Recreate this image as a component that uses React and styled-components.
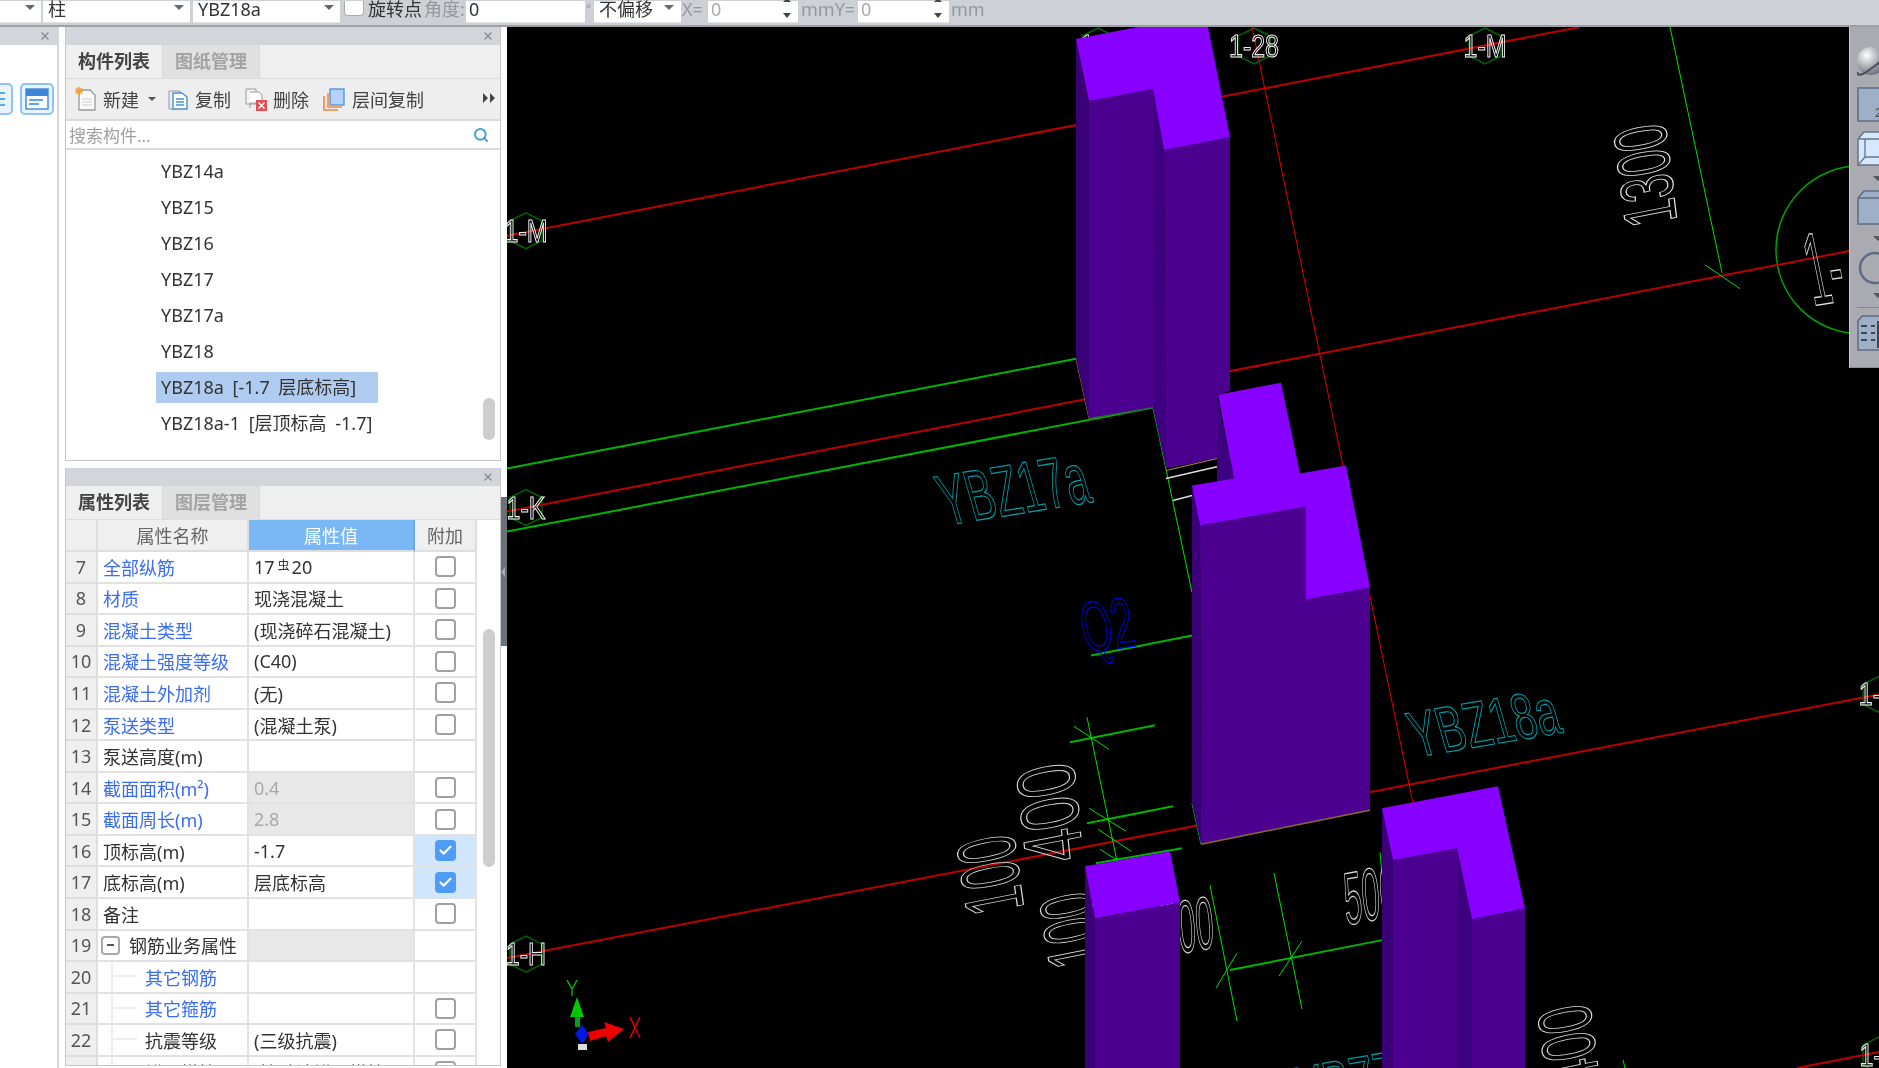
import React from 'react';
import styled, { createGlobalStyle } from 'styled-components';
import { Search, Check, X as XIcon } from 'lucide-react';

const Global = createGlobalStyle`
  html, body { margin: 0; padding: 0; background: #fff; overflow: hidden; }
  body { font-family: "Noto Sans", "Noto Sans CJK SC", sans-serif; font-size: 18px; color: #333; }
  #root { width: 1879px; height: 1068px; }
`;

const Page = styled.div`
  width: 1879px; height: 1068px; display: flex; flex-direction: column; overflow: hidden; filter: blur(0.35px);
`;

/* ---------- top toolbar ---------- */
const TopBar = styled.div`
  height: 27px; flex: none; box-sizing: border-box; display: flex; align-items: flex-start;
  background: #cdd0d4; border-bottom: 2px solid #9da0a5; line-height: 16px; padding-top: 1px;
`;
const Field = styled.div`
  width: ${p => p.$w}px; margin-left: ${p => p.$ml || 0}px; height: 22px; flex: none; box-sizing: border-box;
  padding-left: ${p => p.$pl ?? 5}px; background: #fff; position: relative; color: ${p => p.$muted ? '#aaa' : '#333'};
  border-bottom: 1px solid #e4e4e4; white-space: nowrap;
`;
const Caret = styled.i`
  position: absolute; right: ${p => p.$r}px; top: 4px; width: 0; height: 0;
  border-left: 5px solid transparent; border-right: 5px solid transparent; border-top: 5px solid #666;
`;
const SpinBox = styled.div`
  position: absolute; right: 6px; top: -3px; height: 20px; width: 10px;
  display: flex; flex-direction: column; justify-content: space-between; align-items: center;
`;
const SpinUp = styled.i`
  width: 0; height: 0; border-left: 4px solid transparent; border-right: 4px solid transparent; border-bottom: 4px solid #444;
`;
const SpinDown = styled.i`
  width: 0; height: 0; border-left: 4px solid transparent; border-right: 4px solid transparent; border-top: 5px solid #444;
`;
const TopCheck = styled.div`
  width: 20px; height: 15px; margin-left: 4px; flex: none; background: #fff; border: 1px solid #aaa;
  border-top: none; border-radius: 0 0 4px 4px; box-sizing: border-box;
`;
const TopText = styled.span`
  flex: none; white-space: nowrap; font-size: ${p => p.$fs || 18}px; width: ${p => p.$w}px; margin-left: ${p => p.$ml || 0}px;
  color: ${p => p.$muted ? '#95989c' : '#333'};
`;

/* ---------- main ---------- */
const Main = styled.div`flex: 1; display: flex; min-height: 0; background: #fff;`;
const LeftDock = styled.div`
  width: 59px; flex: none; box-sizing: border-box; border-right: 2px solid #d4d6da; display: flex; flex-direction: column;
`;
const DockHead = styled.div`
  height: 18px; flex: none; background: #d3d5da; display: flex; align-items: center; justify-content: flex-end; padding-right: ${p => p.$pr}px; color: #8a8d92;
`;
const DockButtons = styled.div`
  display: flex; gap: 7px; margin: 38px 0 0 -21px;
`;
const ViewButton = styled.div`
  width: 34px; height: 32px; box-sizing: border-box; border: 2px solid #8cc2f8; border-radius: 5px; background: #eaf4fe;
  display: flex; align-items: center; justify-content: center; flex: none;
`;
const SideColumn = styled.div`
  width: 436px; margin-left: 6px; flex: none; display: flex; flex-direction: column; gap: 7px;
`;
const Panel = styled.section`
  box-sizing: border-box; height: ${p => p.$h}px; flex: none; border: 1px solid #c4c6c9; border-top: none;
  display: flex; flex-direction: column; overflow: hidden; position: relative; background: #fff;
`;
const TabRow = styled.div`
  height: 34px; flex: none; box-sizing: border-box; background: #efefef; border-bottom: 1px solid #dcdcdc; display: flex;
`;
const Tab = styled.div`
  width: 97px; box-sizing: border-box; text-align: center; line-height: 33px; font-size: 18px; flex: none;
  font-weight: 700; color: ${p => p.$active ? '#444' : '#a3a3a3'};
  background: ${p => p.$active ? '#efefef' : '#e0e0e0'}; border-right: 1px solid #d8d8d8;
`;
const ActionRow = styled.div`
  height: 42px; flex: none; box-sizing: border-box; background: #eeeeee; border-bottom: 2px solid #dadada; display: flex; align-items: center;
  padding-left: 9px; position: relative; color: #444;
`;
const ActionGlyph = styled.svg`flex: none; margin-right: ${p => p.$mr}px; margin-left: ${p => p.$ml || 0}px;`;
const ActionLabel = styled.span`flex: none; white-space: nowrap;`;
const ActionCaret = styled.i`
  margin: 0 12px 0 9px; flex: none; width: 0; height: 0; border-left: 4px solid transparent; border-right: 4px solid transparent; border-top: 4px solid #555;
`;
const MoreMark = styled.svg`position: absolute; right: 5px; top: 14px;`;
const SearchRow = styled.div`
  height: 29px; flex: none; box-sizing: border-box; border-bottom: 2px solid #dadada; display: flex; align-items: center; justify-content: space-between;
  padding: 0 11px 0 3px; color: #a0a0a0; font-size: 17px;
`;
const List = styled.div`flex: 1; padding: 3px 0 0 90px; min-height: 0;`;
const ListRow = styled.div`height: 36px; display: flex; align-items: center; white-space: nowrap;`;
const ListText = styled.span`
  width: 222px; height: 31px; line-height: 30px; box-sizing: border-box; padding-left: 5px; flex: none; word-spacing: 4px;
  background: ${p => p.$selected ? '#afcbef' : 'transparent'};
`;
const Thumb = styled.div`
  position: absolute; left: 417px; top: ${p => p.$top}px; width: 12px; height: ${p => p.$h}px; border-radius: 6px; background: #cdcdcd;
`;
const Table = styled.div`
  display: grid; grid-template-columns: 32px 151px 166px 62px; grid-template-rows: 32px; grid-auto-rows: 31.56px; width: 411px;
`;
const HeadCell = styled.div`
  background: ${p => p.$active ? '#7ab7f5' : '#efefef'}; color: ${p => p.$active ? '#fff' : '#666'};
  box-sizing: border-box; border-right: 2px solid ${p => p.$active ? '#6aa9ea' : '#dedede'}; border-bottom: 2px solid #dedede;
  display: flex; align-items: center; justify-content: center; white-space: nowrap;
`;
const IndexCell = styled.div`
  background: #efefef; color: #555; box-sizing: border-box; border-right: 2px solid #dedede; border-bottom: 2px solid #dedede;
  display: flex; align-items: center; justify-content: center; font-size: 18px;
`;
const Cell = styled.div`
  box-sizing: border-box; border-right: 2px solid #e2e2e2; border-bottom: 2px solid #e2e2e2; display: flex; align-items: center;
  padding-left: ${p => p.$pl ?? 5}px; white-space: nowrap; overflow: hidden; position: relative;
  justify-content: ${p => p.$center ? 'center' : 'flex-start'};
  background: ${p => p.$bg || '#fff'}; color: ${p => p.$color || '#333'};
`;
const CheckBoxEl = styled.div`
  width: 21px; height: 21px; box-sizing: border-box; border-radius: 4px; flex: none; display: flex; align-items: center; justify-content: center;
  border: 2px solid ${p => p.$on ? '#4f9bf7' : '#a0a0a0'}; background: ${p => p.$on ? '#4f9bf7' : '#fff'}; color: #fff;
`;
const TreeToggle = styled.span`
  width: 19px; height: 19px; box-sizing: border-box; border: 2px solid #a8a8a8; border-radius: 4px; margin-right: 9px; flex: none;
  display: flex; align-items: center; justify-content: center; position: relative;
  &::before { content: ""; width: 7px; height: 2px; background: #555; }
`;
const TreeLine = styled.i`
  position: absolute; left: 13px; top: 0; bottom: 0; width: 0; border-left: 2px solid #eeeeee;
  &::after { content: ""; position: absolute; left: 0; top: 13px; width: 24px; border-top: 2px solid #eeeeee; }
`;
const RebarMark = styled.span`font-size: 12px; margin: 0 2px 0 3px; position: relative; top: -2px;`;
const Gutter = styled.div`width: 6px; flex: none; position: relative; background: #fff;`;
const Splitter = styled.div`
  position: absolute; left: 0; top: 470px; width: 6px; height: 149px; background: #6b7179; display: flex; align-items: center;
  &::before { content: ""; border-right: 4px solid #aab; border-top: 5px solid transparent; border-bottom: 5px solid transparent; }
`;
const Canvas = styled.div`flex: 1; background: #000; position: relative; overflow: hidden;`;
const Drawing = styled.svg`display: block; width: 100%; height: 100%;`;
const CadText = styled.text`
  font-family: "Liberation Sans", sans-serif; font-size: 20px; fill: none; stroke: ${p => p.$color}; stroke-width: ${p => p.$sw || 1}px;
  vector-effect: non-scaling-stroke;
`;
const RightTools = styled.div`
  position: absolute; right: 0; top: 0; width: 30px; height: 341px; box-sizing: border-box; background: #a9abb0; border-left: 1px solid #c5c7ca; border-bottom: 1px solid #8e9095;
  overflow: hidden; padding: 20px 0 0 7px; display: flex; flex-direction: column; align-items: flex-start;
`;
const ToolIcon = styled.svg`flex: none; display: block; margin-bottom: ${p => p.$mb || 0}px;`;
const ToolCaret = styled.i`
  flex: none; width: 0; height: 0; border-left: 5px solid transparent; border-right: 5px solid transparent; border-top: 5px solid #55585f; margin: ${p => p.$m};
`;
const ToolRule = styled.div`flex: none; width: 40px; height: 1px; background: #85878b; margin: 9px 0 7px;`;

/* ---------- data ---------- */
const listItems = ['YBZ14a', 'YBZ15', 'YBZ16', 'YBZ17', 'YBZ17a', 'YBZ18', 'YBZ18a [-1.7 层底标高]', 'YBZ18a-1 [层顶标高 -1.7]'];
const BLUE = '#3a6cf4';
const rows = [
  { n: 7, name: '全部纵筋', blue: 1, rebar: 1, box: 0 },
  { n: 8, name: '材质', blue: 1, val: '现浇混凝土', box: 0 },
  { n: 9, name: '混凝土类型', blue: 1, val: '(现浇碎石混凝土)', box: 0 },
  { n: 10, name: '混凝土强度等级', blue: 1, val: '(C40)', box: 0 },
  { n: 11, name: '混凝土外加剂', blue: 1, val: '(无)', box: 0 },
  { n: 12, name: '泵送类型', blue: 1, val: '(混凝土泵)', box: 0 },
  { n: 13, name: '泵送高度(m)', val: '' },
  { n: 14, name: '截面面积(m²)', blue: 1, val: '0.4', gray: 1, box: 0 },
  { n: 15, name: '截面周长(m)', blue: 1, val: '2.8', gray: 1, box: 0 },
  { n: 16, name: '顶标高(m)', val: '-1.7', box: 1 },
  { n: 17, name: '底标高(m)', val: '层底标高', box: 1 },
  { n: 18, name: '备注', val: '', box: 0 },
  { n: 19, name: '钢筋业务属性', toggle: 1, val: '', gray: 1 },
  { n: 20, name: '其它钢筋', blue: 1, tree: 1, val: '' },
  { n: 21, name: '其它箍筋', blue: 1, tree: 1, val: '', box: 0 },
  { n: 22, name: '抗震等级', tree: 1, val: '(三级抗震)', box: 0 },
  { n: 23, name: '锚固搭接', tree: 1, val: '(按默认锚固搭接)', box: 0 },
];

const redLines = [
  [507, 235, 1580, 26, 2], [507, 511, 1850, 250, 2], [507, 958, 1879, 694, 2], [1797, 1068, 1879, 1052, 2],
  [1252, 26, 1413, 803, 1],
];
const wideGreen = [
  [507, 468, 1076, 358], [507, 531, 1153, 407], [1091, 655, 1192, 635], [1070, 742, 1155, 725], [1087, 823, 1173, 806],
  [1096, 863, 1182, 848], [1230, 970, 1382, 940],
];
const thinGreen = [
  [1153, 407, 1192, 592], [1087, 717, 1117, 861], [1074, 726, 1109, 749], [1089, 808, 1126, 831], [1098, 829, 1131, 851], [1100, 849, 1117, 860],
  [1210, 885, 1237, 1021], [1274, 873, 1302, 1009], [1237, 953, 1216, 988], [1302, 941, 1279, 976],
  [1670, 26, 1722, 272], [1705, 264, 1740, 288], [1192, 803, 1201, 844], [1380, 852, 1382, 875], [1623, 1060, 1625, 1068],
];
const hexes = [
  [526, 230, '1-M'], [1254, 45, '1-28'], [1485, 45, '1-M'], [1098, 45, '1-2'], [526, 507, '1-K'], [526, 954, '1-H'], [1879, 694, '1-H'], [1879, 1055, '1-E'],
];
const cadLabels = [
  ['1300', '#e4e4e4', -0.28, -2.25, 3.7, -0.72, 1677, 220],
  ['400', '#d8d8d8', -0.3, -2.95, 4.1, -0.8, 1083, 857],
  ['100', '#d8d8d8', -0.33, -2.3, 4.1, -0.8, 1024, 908],
  ['100', '#d8d8d8', -0.33, -2.2, 3.75, -0.75, 1102, 962],
  ['400', '#d8d8d8', -0.33, -2.43, 3.75, -0.75, 1600, 1082],
  ['500', '#d8d8d8', 1.6, -0.3, 0.3, 3.7, 1346, 925],
  ['500', '#d8d8d8', 1.6, -0.3, 0.3, 3.7, 1162, 957],
  ['YBZ17a', '#00a0a8', 2.05, -0.333, 1.0, 3.5, 946, 525],
  ['YBZ18a', '#00a0a8', 2.05, -0.347, 0.9, 3.15, 1416, 757],
  ['YBZ7A', '#00a0a8', 1.98, -0.347, 0.9, 3.15, 1305, 1112],
  ['Q2', '#0000ff', 1.95, -0.25, 0.7, 3.5, 1086, 652],
  ['1-', '#e8e8e8', 2, -0.3, 1.05, 5.1, 1813, 305],
];
const TOP = '#8800ff', FRONT = '#4b0090', LEFT = '#3a0078', INNER = '#3c0080';
const solids = [
  [LEFT, '1076,38 1089,100 1089,418 1076,358'],
  [FRONT, '1089,100 1153,88 1153,407 1089,418'],
  [INNER, '1153,88 1164,149 1166,468 1153,407'],
  [FRONT, '1164,149 1230,136 1230,390 1218,394 1217,458 1166,468'],
  [TOP, '1076,38 1138,26 1208,26 1230,136 1164,149 1153,88 1089,100'],
  [INNER, '1217,394 1234,478 1217,482'],
  [LEFT, '1192,485 1200,525 1201,844 1192,803'],
  [FRONT, '1200,525 1306,506 1306,599 1370,587 1370,810 1201,844'],
  [TOP, '1218,394 1281,382 1300,473 1346,465 1370,587 1306,599 1306,506 1200,525 1192,485 1234,478'],
  [LEFT, '1085,866 1095,918 1095,1068 1085,1068'],
  [FRONT, '1095,918 1180,902 1180,1068 1095,1068'],
  [TOP, '1085,866 1170,851 1180,902 1095,918'],
  [LEFT, '1382,808 1393,860 1393,1068 1382,1068'],
  [FRONT, '1393,860 1457,848 1457,1068 1393,1068'],
  [INNER, '1457,848 1472,919 1472,1068 1457,1068'],
  [FRONT, '1472,919 1525,908 1525,1068 1472,1068'],
  [TOP, '1382,808 1498,786 1525,908 1472,919 1457,848 1393,860'],
];
const hexPoints = (x, y) => `${x},${y - 18} ${x + 16},${y - 10} ${x + 16},${y + 10} ${x},${y + 18} ${x - 16},${y + 10} ${x - 16},${y - 10}`;

function Select({ w, ml, r, children }) {
  return <Field $w={w} $ml={ml}>{children}<Caret $r={r} /></Field>;
}
function Spin({ w, ml }) {
  return <Field $w={w} $ml={ml} $muted $pl={3}>0<SpinBox><SpinUp /><SpinDown /></SpinBox></Field>;
}
function Box({ on }) {
  return <CheckBoxEl $on={on}>{on ? <Check size={15} strokeWidth={3.4} /> : null}</CheckBoxEl>;
}

function Cad() {
  return (
    <Drawing viewBox="507 26 1372 1042" preserveAspectRatio="none">
      <circle cx="1860" cy="249" r="84" fill="none" stroke="#00a000" strokeWidth="1.5" />
      {hexes.map(([x, y]) => <polygon key={`${x}-${y}`} points={hexPoints(x, y)} fill="none" stroke="#006400" strokeWidth="1.5" />)}
      {redLines.map(([a, b, c, d, w]) => <line key={`${a}-${b}`} x1={a} y1={b} x2={c} y2={d} stroke={w > 1 ? '#bb0000' : '#e00000'} strokeWidth={w} />)}
      {wideGreen.map(([a, b, c, d]) => <line key={`${a}-${b}`} x1={a} y1={b} x2={c} y2={d} stroke="#00b400" strokeWidth="2" />)}
      {thinGreen.map(([a, b, c, d]) => <line key={`${a}-${b}`} x1={a} y1={b} x2={c} y2={d} stroke="#00e000" strokeWidth="1" />)}
      {hexes.map(([x, y, t]) => (
        <CadText key={`${t}-${x}`} $color="#f2f2f2" textAnchor="middle" transform={`matrix(1.25 0 0 1.6 ${x} ${y + 11})`}>{t}</CadText>
      ))}
      {cadLabels.map(([t, color, a, b, c, d, e, f]) => (
        <CadText key={`${t}-${e}`} $color={color} transform={`matrix(${a} ${b} ${c} ${d} ${e} ${f})`}>{t}</CadText>
      ))}
      <line x1="1076" y1="358" x2="1089" y2="418" stroke="#a08020" />
      <line x1="1166" y1="478" x2="1218" y2="466" stroke="#dddddd" strokeWidth="1.5" />
      <line x1="1173" y1="500" x2="1192" y2="495" stroke="#dddddd" strokeWidth="1.5" />
      {solids.map(([fill, pts]) => <polygon key={pts} points={pts} fill={fill} />)}
      <line x1="1166" y1="470" x2="1217" y2="458" stroke="#b09020" strokeWidth="1" />
      <line x1="1201" y1="844" x2="1370" y2="810" stroke="#8a7020" strokeWidth="1.5" />
      <line x1="1089" y1="418" x2="1153" y2="407" stroke="#207030" strokeWidth="1.5" />
      {/* axis triad */}
      <path d="M567 980 L572 989 L577 980 M572 989 V996" fill="none" stroke="#00d000" strokeWidth="1.2" />
      <path d="M577 997 L584 1017 H570 Z" fill="#00c800" />
      <rect x="575" y="1017" width="5" height="10" fill="#00a020" />
      <path d="M582 1025 L589 1034 L582 1044 L575 1034 Z" fill="#0018e0" />
      <rect x="578" y="1044" width="9" height="6" fill="#dddddd" />
      <path d="M588 1032 L606 1028 L604 1022 L624 1029 L608 1042 L606 1036 L590 1041 Z" fill="#ee0000" />
      <path d="M630 1017 L640 1038 M640 1017 L630 1038" stroke="#ee0000" strokeWidth="1.4" fill="none" />
    </Drawing>
  );
}

function Tools() {
  return (
    <RightTools>
      <ToolIcon width="36" height="34" $mb={6} viewBox="0 0 36 34">
        <defs>
          <radialGradient id="ball" cx="35%" cy="30%" r="80%"><stop offset="0" stopColor="#fff" /><stop offset="1" stopColor="#5c6270" /></radialGradient>
        </defs>
        <circle cx="14" cy="14" r="14" fill="url(#ball)" />
        <path d="M1 25 Q-1 30 8 26 L30 10" fill="none" stroke="#4a4f58" strokeWidth="2" />
      </ToolIcon>
      <ToolIcon width="36" height="36" $mb={8} viewBox="0 0 36 36">
        <rect x="1" y="1" width="40" height="33" fill="#9eb0c8" stroke="#5f6c80" strokeWidth="1.5" />
        <text x="18" y="30" fontSize="13" fill="#444" fontFamily="Liberation Sans">2</text>
      </ToolIcon>
      <ToolIcon width="36" height="36" viewBox="0 0 36 36">
        <path d="M1 8 L7 1 H40 V34 H1 Z" fill="#d6e8ff" stroke="#667488" strokeWidth="1.5" />
        <path d="M1 8 H40 M8 8 V26 H40 M1 34 L8 26" fill="none" stroke="#667488" strokeWidth="1.3" />
      </ToolIcon>
      <ToolCaret $m="9px 0 9px 16px" />
      <ToolIcon width="36" height="36" viewBox="0 0 36 36">
        <path d="M1 8 L7 1 H40 V34 H1 Z" fill="#9eb0c8" stroke="#5f6c80" strokeWidth="1.5" />
        <path d="M1 8 H40" stroke="#5f6c80" strokeWidth="1.3" />
      </ToolIcon>
      <ToolCaret $m="10px 0 10px 16px" />
      <ToolIcon width="36" height="36" viewBox="0 0 36 36">
        <circle cx="18" cy="17" r="15" fill="#a9abb0" stroke="#5f6c80" strokeWidth="2.5" />
      </ToolIcon>
      <ToolCaret $m="6px 0 0 16px" />
      <ToolRule />
      <ToolIcon width="36" height="36" viewBox="0 0 36 36">
        <path d="M1 6 L5 1 H40 V35 H1 Z" fill="#9eb0c8" stroke="#5f6c80" strokeWidth="1.5" />
        <path d="M4 11 h6 M4 18 h6 M4 25 h6 M14 11 h4 M14 18 h4 M14 25 h4 M21 6 V33 M25 11 h6 M25 18 h6 M25 25 h6" stroke="#3a4656" strokeWidth="2" />
      </ToolIcon>
    </RightTools>
  );
}

export default function App() {
  return (
    <Page>
      <Global />
      <TopBar>
        <Select w={41} r={6} />
        <Select w={147} ml={2} r={6}>柱</Select>
        <Select w={147} ml={3} r={6}>YBZ18a</Select>
        <TopCheck />
        <TopText $w={56} $ml={4}>旋转点</TopText>
        <TopText $w={42} $muted>角度:</TopText>
        <Field $w={119} $pl={3}>0</Field>
        <TopText $w={8} $ml={1} $fs={12} $muted>°</TopText>
        <Select w={87} r={7}>不偏移</Select>
        <TopText $w={26} $ml={1} $muted>X=</TopText>
        <Spin w={90} />
        <TopText $w={57} $ml={3} $muted>mmY=</TopText>
        <Spin w={91} />
        <TopText $w={32} $ml={2} $muted>mm</TopText>
      </TopBar>
      <Main>
        <LeftDock>
          <DockHead $pr={6}><XIcon size={12} strokeWidth={3} /></DockHead>
          <DockButtons>
            <ViewButton>
              <svg width="22" height="20" viewBox="0 0 22 20"><path d="M2 4h18M2 10h18M2 16h18" stroke="#5aa6f2" strokeWidth="2" /></svg>
            </ViewButton>
            <ViewButton>
              <svg width="24" height="22" viewBox="0 0 24 22">
                <rect x="1" y="1" width="22" height="20" fill="#fff" stroke="#4a8fd8" strokeWidth="1.5" />
                <rect x="1" y="1" width="22" height="7" fill="#3f86d6" />
                <path d="M4 12h14M4 16h10" stroke="#5aa6f2" strokeWidth="2" />
              </svg>
            </ViewButton>
          </DockButtons>
        </LeftDock>
        <SideColumn>
          <Panel $h={434}>
            <DockHead $pr={6}><XIcon size={12} strokeWidth={3} /></DockHead>
            <TabRow><Tab $active>构件列表</Tab><Tab>图纸管理</Tab></TabRow>
            <ActionRow>
              <ActionGlyph width="22" height="24" $mr={6} viewBox="0 0 22 24">
                <path d="M4 3h11l5 5v15H4z" fill="#fafafa" stroke="#999" strokeWidth="1.3" />
                <path d="M7 12h10M7 15h10M7 18h10" stroke="#ccc" />
                <path d="M1 1l6 6M7 1l-6 6M4 0v8M0 4h8" stroke="#f0a030" strokeWidth="1.4" />
              </ActionGlyph>
              <ActionLabel>新建</ActionLabel>
              <ActionCaret />
              <ActionGlyph width="20" height="22" $mr={7} viewBox="0 0 20 22">
                <path d="M1 3h11v18H1z" fill="#e8eef6" stroke="#8a99ac" />
                <path d="M5 5h9l5 4v12H5z" fill="#fff" stroke="#4a8fd8" strokeWidth="1.4" />
                <path d="M8 11h8M8 14h8M8 17h8" stroke="#4a8fd8" strokeWidth="1.3" />
              </ActionGlyph>
              <ActionLabel>复制</ActionLabel>
              <ActionGlyph width="23" height="23" $ml={14} $mr={5} viewBox="0 0 23 23">
                <path d="M1 1h10v15H1z" fill="#f4f4f4" stroke="#999" />
                <path d="M5 4h9l3 3v8H5v5" fill="#fff" stroke="#999" />
                <rect x="11" y="12" width="11" height="11" fill="#e15050" />
                <path d="M13.5 14.5l6 6M19.5 14.5l-6 6" stroke="#fff" strokeWidth="1.4" />
              </ActionGlyph>
              <ActionLabel>删除</ActionLabel>
              <ActionGlyph width="22" height="23" $ml={14} $mr={7} viewBox="0 0 22 23">
                <rect x="7" y="1" width="14" height="16" fill="#b4d2f8" stroke="#4a8fd8" strokeWidth="1.3" />
                <path d="M5 5v14h14M1 8v14h14" fill="none" stroke="#f08a3c" strokeWidth="1.6" />
              </ActionGlyph>
              <ActionLabel>层间复制</ActionLabel>
              <MoreMark width="12" height="10" viewBox="0 0 12 10"><path d="M0 0l5 5-5 5zM7 0l5 5-5 5z" fill="#444" /></MoreMark>
            </ActionRow>
            <SearchRow>搜索构件...<Search size={16} color="#4a9fd0" strokeWidth={3} /></SearchRow>
            <List>
              {listItems.map((t, i) => (
                <ListRow key={t}><ListText $selected={i === 6}>{t}</ListText></ListRow>
              ))}
            </List>
            <Thumb $top={371} $h={42} />
          </Panel>
          <Panel $h={598}>
            <DockHead $pr={6}><XIcon size={12} strokeWidth={3} /></DockHead>
            <TabRow><Tab $active>属性列表</Tab><Tab>图层管理</Tab></TabRow>
            <Table>
              <HeadCell />
              <HeadCell>属性名称</HeadCell>
              <HeadCell $active>属性值</HeadCell>
              <HeadCell>附加</HeadCell>
              {rows.map(r => (
                <React.Fragment key={r.n}>
                  <IndexCell>{r.n}</IndexCell>
                  <Cell $color={r.blue ? BLUE : '#333'} $pl={r.tree ? 47 : r.toggle ? 3 : 5}>
                    {r.tree ? <TreeLine /> : null}
                    {r.toggle ? <TreeToggle /> : null}
                    {r.name}
                  </Cell>
                  <Cell $bg={r.gray ? '#e8e8e8' : undefined} $color={r.gray && r.val ? '#a8a8a8' : '#333'}>
                    {r.rebar ? <>17<RebarMark>虫</RebarMark>20</> : r.val}
                  </Cell>
                  <Cell $center $pl={0} $bg={r.box === 1 ? '#cfe6fd' : undefined}>
                    {r.box !== undefined ? <Box on={r.box === 1} /> : null}
                  </Cell>
                </React.Fragment>
              ))}
            </Table>
            <Thumb $top={161} $h={238} />
          </Panel>
        </SideColumn>
        <Gutter><Splitter /></Gutter>
        <Canvas>
          <Cad />
          <Tools />
        </Canvas>
      </Main>
    </Page>
  );
}
